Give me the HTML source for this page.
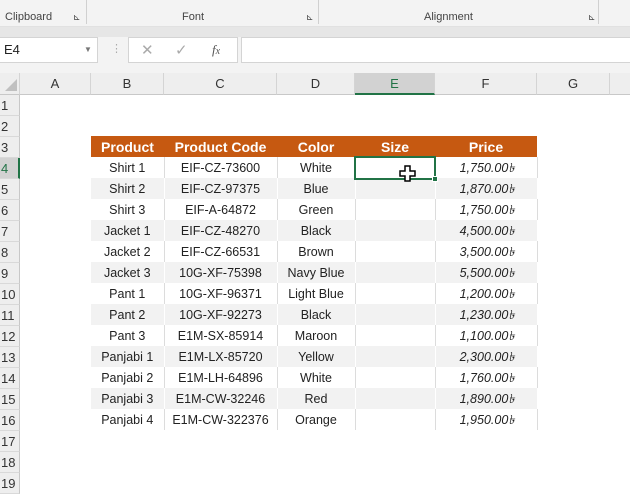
<!DOCTYPE html>
<html><head><meta charset="utf-8"><style>
*{margin:0;padding:0;box-sizing:border-box}
body{width:630px;height:482px;overflow:hidden;background:#fff;font-family:"Liberation Sans",sans-serif;position:relative}
.abs{position:absolute}
.rib{left:0;top:0;width:630px;height:27px;background:#f3f3f3;border-bottom:1px solid #e1e1e1}
.rib span{position:absolute;top:11px;font-size:11px;color:#444}
.strip{left:0;top:27px;width:630px;height:10px;background:#e6e6e6}
.fbar{left:0;top:37px;width:630px;height:36px;background:#f3f3f3}
.box{position:absolute;background:#fff;border:1px solid #d4d4d4}
.colh{top:73px;height:22px;background:#eeeeee;border-bottom:1px solid #c8c8c8;font-size:13px;color:#333;text-align:center;line-height:22px;border-right:1px solid #d4d4d4}
.rowh{left:0;width:20px;height:21px;background:#eeeeee;border-right:1px solid #c8c8c8;border-bottom:1px solid #d9d9d9;font-size:13px;color:#333;line-height:21px;padding-left:1px}
table{position:absolute;left:91px;top:136px;border-collapse:collapse;table-layout:fixed;font-size:12.5px;color:#222}
td{height:21px;text-align:center;padding:0;border-right:1px solid #dcdcdc;white-space:nowrap}
tr.g td{background:#f2f2f2;border-right-color:#fff}
tr.h td{background:#c65911;color:#fff;font-weight:bold;font-size:14px;border-right:none}
td.p{text-align:right;font-style:italic;padding-right:22px}
td.p span{position:relative;top:2px}
</style></head><body>
<div class="abs rib">
<span style="left:5px">Clipboard</span><span style="left:73px;top:12px;font-size:9px">⊾</span>
<div class="abs" style="left:86px;top:0;width:1px;height:24px;background:#d0d0d0"></div>
<span style="left:182px">Font</span><span style="left:306px;top:12px;font-size:9px">⊾</span>
<div class="abs" style="left:318px;top:0;width:1px;height:24px;background:#d0d0d0"></div>
<span style="left:424px">Alignment</span><span style="left:588px;top:12px;font-size:9px">⊾</span>
<div class="abs" style="left:598px;top:0;width:1px;height:24px;background:#d0d0d0"></div>
</div>
<div class="abs strip"></div>
<div class="abs fbar">
<div class="box" style="left:-1px;top:0;width:99px;height:26px;font-size:13px;line-height:24px;padding-left:4px;color:#222">E4<span style="position:absolute;left:84px;top:0;font-size:8px;color:#777">▼</span></div>
<span class="abs" style="left:111px;top:5px;color:#aaa;font-size:11px">⋮</span>
<div class="box" style="left:128px;top:0;width:110px;height:26px;color:#aaa;font-size:15px">
<span class="abs" style="left:12px;top:3px">✕</span><span class="abs" style="left:46px;top:3px">✓</span><span class="abs" style="left:83px;top:4px;font-family:'Liberation Serif',serif;font-style:italic;color:#555;font-size:13px">f<span style="font-size:10px">x</span></span></div>
<div class="box" style="left:241px;top:0;width:395px;height:26px"></div>
</div>
<div class="abs colh" style="left:0;width:20px;background:#eee"><div class="abs" style="right:2px;bottom:3px;width:0;height:0;border-left:12px solid transparent;border-bottom:12px solid #c0c0c0"></div></div>
<div class="abs colh" style="left:20px;width:71px">A</div>
<div class="abs colh" style="left:91px;width:73px">B</div>
<div class="abs colh" style="left:164px;width:113px">C</div>
<div class="abs colh" style="left:277px;width:78px">D</div>
<div class="abs colh" style="left:355px;width:80px;background:#d2d2d2;border-bottom:2px solid #217346;color:#217346">E</div>
<div class="abs colh" style="left:435px;width:102px">F</div>
<div class="abs colh" style="left:537px;width:73px">G</div>
<div class="abs colh" style="left:610px;width:30px"></div>
<div class="abs rowh" style="top:95px">1</div>
<div class="abs rowh" style="top:116px">2</div>
<div class="abs rowh" style="top:137px">3</div>
<div class="abs rowh" style="top:158px;background:#d2d2d2;border-right:2px solid #217346;color:#217346">4</div>
<div class="abs rowh" style="top:179px">5</div>
<div class="abs rowh" style="top:200px">6</div>
<div class="abs rowh" style="top:221px">7</div>
<div class="abs rowh" style="top:242px">8</div>
<div class="abs rowh" style="top:263px">9</div>
<div class="abs rowh" style="top:284px">10</div>
<div class="abs rowh" style="top:305px">11</div>
<div class="abs rowh" style="top:326px">12</div>
<div class="abs rowh" style="top:347px">13</div>
<div class="abs rowh" style="top:368px">14</div>
<div class="abs rowh" style="top:389px">15</div>
<div class="abs rowh" style="top:410px">16</div>
<div class="abs rowh" style="top:431px">17</div>
<div class="abs rowh" style="top:452px">18</div>
<div class="abs rowh" style="top:473px">19</div>
<table>
<colgroup><col style="width:73px"><col style="width:113px"><col style="width:78px"><col style="width:80px"><col style="width:102px"></colgroup>
<tr class="h"><td>Product</td><td>Product Code</td><td>Color</td><td>Size</td><td style="text-align:center">Price</td></tr>
<tr><td>Shirt 1</td><td>EIF-CZ-73600</td><td>White</td><td></td><td class="p"><span>1,750.00৳</span></td></tr>
<tr class="g"><td>Shirt 2</td><td>EIF-CZ-97375</td><td>Blue</td><td></td><td class="p"><span>1,870.00৳</span></td></tr>
<tr><td>Shirt 3</td><td>EIF-A-64872</td><td>Green</td><td></td><td class="p"><span>1,750.00৳</span></td></tr>
<tr class="g"><td>Jacket 1</td><td>EIF-CZ-48270</td><td>Black</td><td></td><td class="p"><span>4,500.00৳</span></td></tr>
<tr><td>Jacket 2</td><td>EIF-CZ-66531</td><td>Brown</td><td></td><td class="p"><span>3,500.00৳</span></td></tr>
<tr class="g"><td>Jacket 3</td><td>10G-XF-75398</td><td>Navy Blue</td><td></td><td class="p"><span>5,500.00৳</span></td></tr>
<tr><td>Pant 1</td><td>10G-XF-96371</td><td>Light Blue</td><td></td><td class="p"><span>1,200.00৳</span></td></tr>
<tr class="g"><td>Pant 2</td><td>10G-XF-92273</td><td>Black</td><td></td><td class="p"><span>1,230.00৳</span></td></tr>
<tr><td>Pant 3</td><td>E1M-SX-85914</td><td>Maroon</td><td></td><td class="p"><span>1,100.00৳</span></td></tr>
<tr class="g"><td>Panjabi 1</td><td>E1M-LX-85720</td><td>Yellow</td><td></td><td class="p"><span>2,300.00৳</span></td></tr>
<tr><td>Panjabi 2</td><td>E1M-LH-64896</td><td>White</td><td></td><td class="p"><span>1,760.00৳</span></td></tr>
<tr class="g"><td>Panjabi 3</td><td>E1M-CW-32246</td><td>Red</td><td></td><td class="p"><span>1,890.00৳</span></td></tr>
<tr><td>Panjabi 4</td><td>E1M-CW-322376</td><td>Orange</td><td></td><td class="p"><span>1,950.00৳</span></td></tr>
</table>
<div class="abs" style="left:354px;top:156px;width:82px;height:24px;border:2px solid #217346"></div>
<div class="abs" style="left:432px;top:176px;width:6px;height:6px;background:#217346;border:1px solid #fff"></div>
<svg class="abs" style="left:399px;top:165px" width="18" height="18" viewBox="0 0 18 18"><path d="M6 1h5v5h5v5h-5v5h-5v-5h-5v-5h5z" fill="#fff" stroke="#000" stroke-width="1.5"/></svg>
</body></html>
